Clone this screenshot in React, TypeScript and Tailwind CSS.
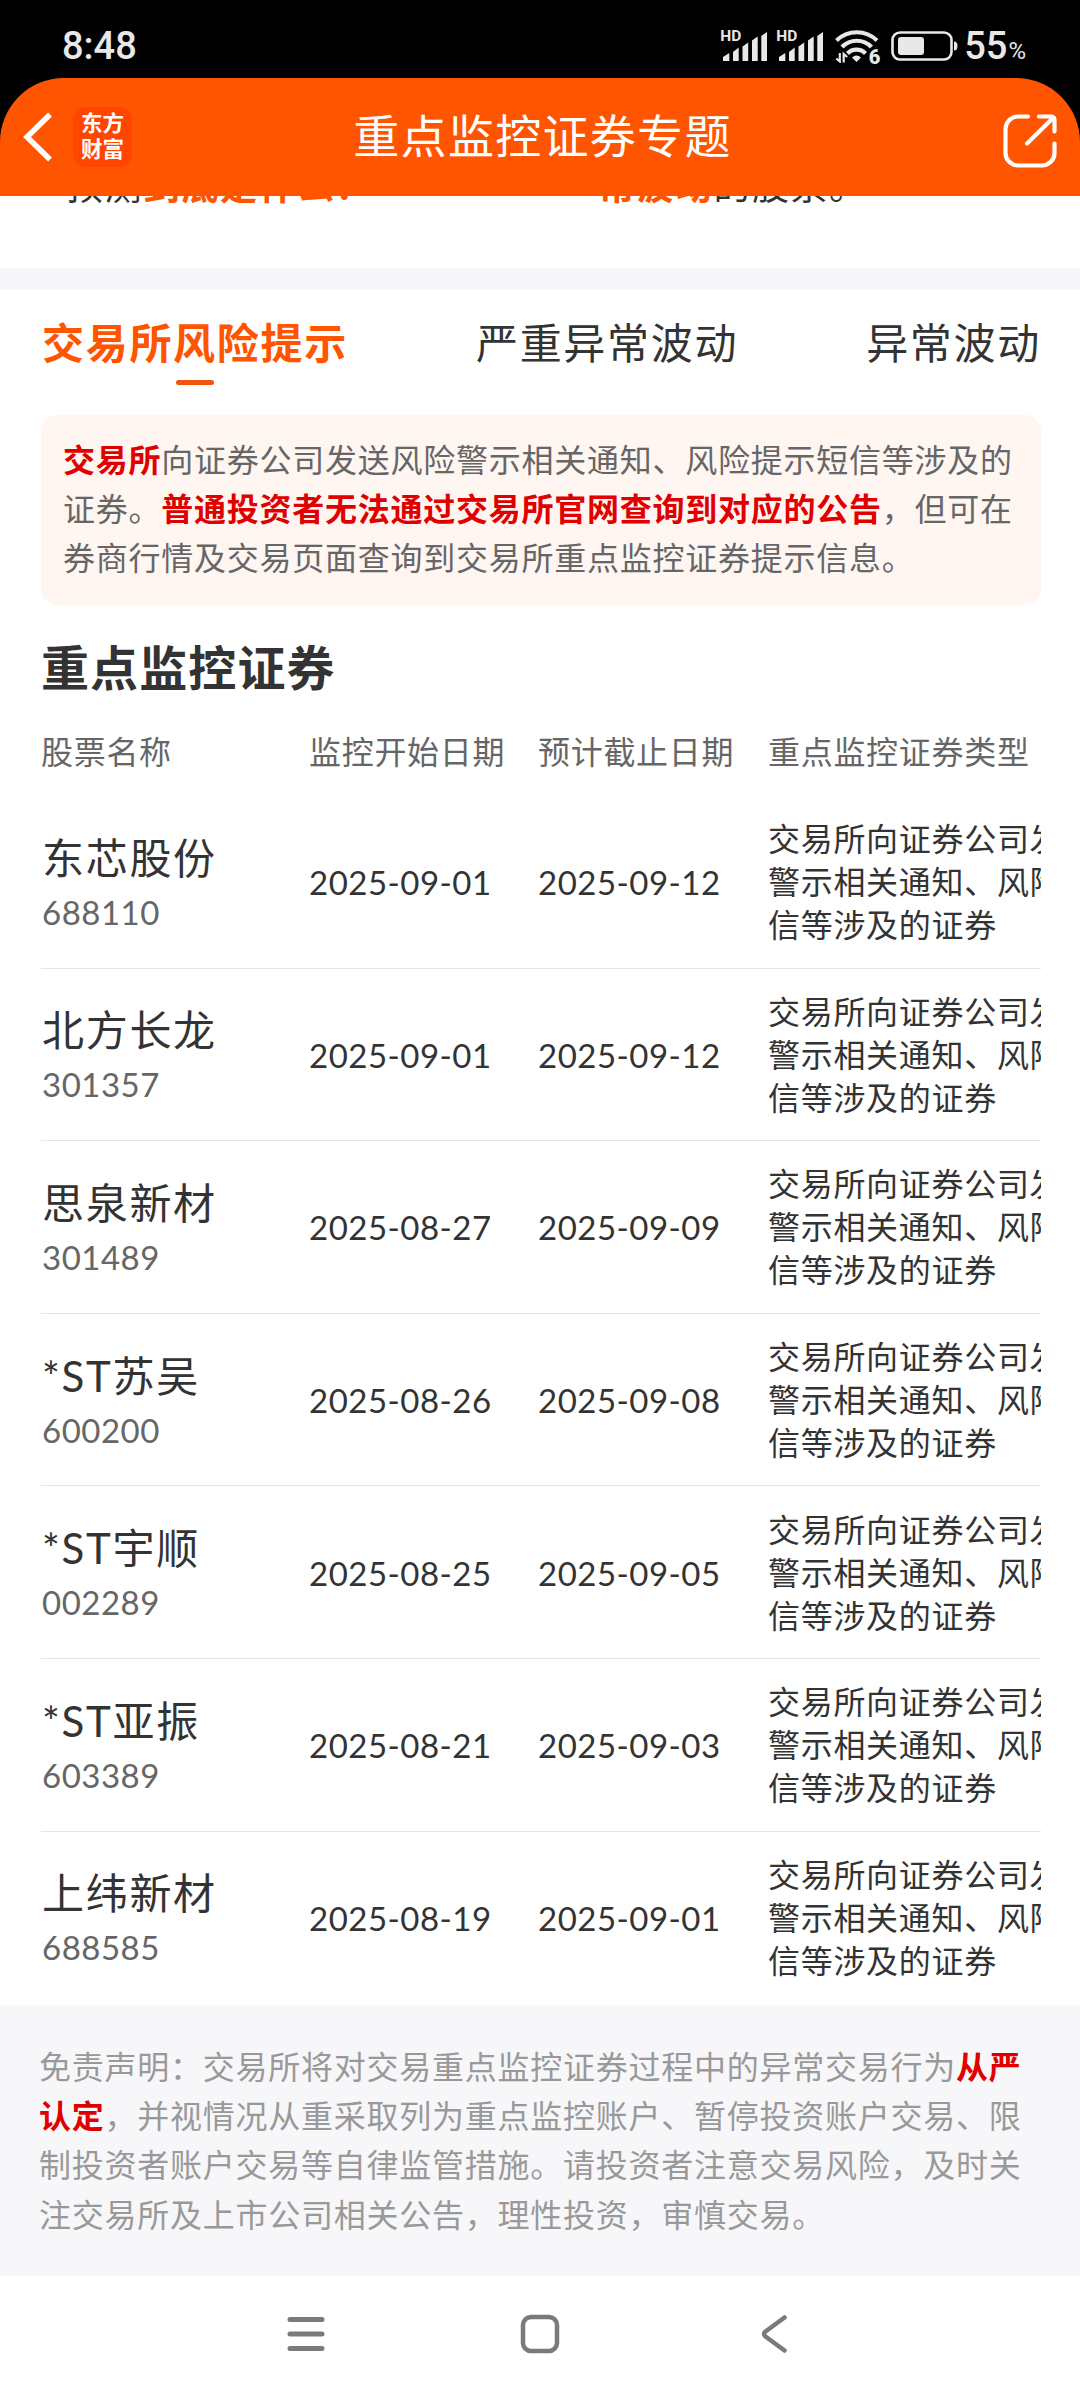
import clsx from "clsx";

const stocks = [
  { name: "东芯股份", code: "688110", start: "2025-09-01", end: "2025-09-12" },
  { name: "北方长龙", code: "301357", start: "2025-09-01", end: "2025-09-12" },
  { name: "思泉新材", code: "301489", start: "2025-08-27", end: "2025-09-09" },
  { name: "*ST苏吴", code: "600200", start: "2025-08-26", end: "2025-09-08" },
  { name: "*ST宇顺", code: "002289", start: "2025-08-25", end: "2025-09-05" },
  { name: "*ST亚振", code: "603389", start: "2025-08-21", end: "2025-09-03" },
  { name: "上纬新材", code: "688585", start: "2025-08-19", end: "2025-09-01" },
];

const tabs = ["交易所风险提示", "严重异常波动", "异常波动"];

const columns = "grid grid-cols-[268px_229px_230px_273px]";

function Signal() {
  return (
    <div className="relative h-[32px] w-[46px]">
      <span className="absolute left-[-1px] top-[-1px] font-[Roboto] text-[15.5px] font-bold leading-[15px]">
        HD
      </span>
      <svg viewBox="0 0 46 32" className="size-full" fill="currentColor">
        <path d="M2 31v-4l6.300-4V31zM12 31V22l5.700-4.500V31zM21.500 31V16.500l5.700-4V31zM31 31V10.500l5.700-4V31zM40.300 31V6l5.700-4V31z" />
      </svg>
    </div>
  );
}

function Wifi() {
  return (
    <div className="relative h-[34px] w-[45px]">
      <svg viewBox="0 0 45 34" className="size-full" fill="none" stroke="currentColor" strokeWidth="4.2">
        <path d="M1.500 11.500a29 29 0 0 1 40.500 0" />
        <path d="M7 18a20.500 20.500 0 0 1 29.500 0" />
        <path d="M12.500 24.500a12.500 12.500 0 0 1 18 0" />
        <path d="M17 28.500q4.500-4 9 0l-4.500 4.500z" fill="currentColor" stroke="none" />
        <path d="M4.800 24v8.500l-3.500-3M8.700 33.500V25l3.500 3" strokeWidth="2.200" />
      </svg>
      <span className="absolute bottom-[-2px] right-0 bg-black pl-[1px] font-[Roboto] text-[20px] font-black leading-[16px]">
        6
      </span>
    </div>
  );
}

function StatusBar() {
  return (
    <div className="flex h-[78px] items-center justify-between bg-black pl-[62px] pr-[54px] pt-[14px] font-[Roboto] text-[#e8e8e8]">
      <span className="text-[38px] font-medium leading-[48px]">8:48</span>
      <div className="flex items-center">
        <Signal />
        <div className="w-[10px]" />
        <Signal />
        <div className="w-[12px]" />
        <Wifi />
        <svg viewBox="0 0 68 30" className="ml-[11px] h-[30px] w-[68px]" fill="none">
          <rect x="1.500" y="1.500" width="59" height="27" rx="7.500" stroke="currentColor" strokeWidth="2.600" />
          <rect x="7" y="6" width="26" height="18" rx="3" fill="currentColor" />
          <path d="M63 10.500q3.500 0 3.500 4.500t-3.500 4.500z" fill="currentColor" />
        </svg>
        <span className="ml-[5px] text-[38px] font-medium leading-[48px]">55</span>
        <span className="ml-[1px] mt-[9px] text-[24px] leading-[30px]">%</span>
      </div>
    </div>
  );
}

function Header() {
  return (
    <div className="bg-black">
      <header className="flex h-[118px] items-center justify-between rounded-t-[64px] bg-[#ff5500] px-[23px] text-white">
        <div className="flex w-[200px] items-center">
          <svg viewBox="0 0 30 50" className="h-[50px] w-[30px]" fill="none" stroke="currentColor" strokeWidth="5.500">
            <path d="M27 2.500 4 25l23 22.500" />
          </svg>
          <div className="ml-[20px] flex h-[60px] w-[59px] flex-col items-center justify-center rounded-[13px] bg-[#ff4500] pb-[2px] text-[21.500px] font-bold leading-[26px]">
            <span>东方</span>
            <span>财富</span>
          </div>
        </div>
        <h1 className="pb-[2px] pl-[5px] text-[46px] leading-[60px] tracking-[1.300px]">
          重点监控证券专题
        </h1>
        <div className="flex w-[200px] justify-end pt-[8px]">
          <svg viewBox="0 0 54 54" className="size-[54px]" fill="none" stroke="currentColor" strokeWidth="4.200" strokeLinecap="round">
            <path d="M25 2.500H15A12.500 12.500 0 0 0 2.500 15v24A12.500 12.500 0 0 0 15 51.500h24A12.500 12.500 0 0 0 51.500 39V29.500" />
            <path d="M36 2.500h12q3.500 0 3.500 3.500v11.500M49 5 24 29.500" />
          </svg>
        </div>
      </header>
    </div>
  );
}

function StockRow({ stock, last }: any) {
  return (
    <div
      className={clsx(
        columns,
        "h-[172.600px] items-center border-b-[1.500px]",
        last ? "border-transparent" : "border-[#e5e5e5]"
      )}
    >
      <div className="pl-[1px] pt-[2px]">
        <p className="text-[42px] leading-[58px] tracking-[1.700px]">{stock.name}</p>
        <p className="text-[33px] leading-[50px] tracking-[0.500px] text-[#666666]">
          {stock.code}
        </p>
      </div>
      <p className="pt-[2px] text-[33px] leading-[43px] tracking-[0.500px]">{stock.start}</p>
      <p className="pt-[2px] text-[33px] leading-[43px] tracking-[0.500px]">{stock.end}</p>
      <div className="overflow-hidden">
        <p className="w-[400px] text-[32px] leading-[43px] tracking-[0.700px]">
          交易所向证券公司发送风险警示相关通知、风险提示短信等涉及的证券
        </p>
      </div>
    </div>
  );
}

export default function App() {
  return (
    <div
      lang="zh-CN"
      className="flex h-[2400px] w-[1080px] flex-col overflow-hidden bg-white font-[Lato,'Noto_Sans_CJK_SC',sans-serif] text-[#333333]"
    >
      <StatusBar />
      <Header />

      {/* bottom of the intro cards, scrolled under the header */}
      <div className="flex h-[72px] items-start overflow-hidden pl-[66px] text-[37px] leading-[54px] tracking-[1.500px]">
        <p className="mt-[-37px] w-[532px]">
          预测<b className="text-[#ff5500]">到底是什么？</b>
        </p>
        <p className="mt-[-37px]">
          <b className="text-[#ff5500]">常波动</b>的股票。
        </p>
      </div>
      <div className="h-[22px] bg-[#f7f7fa]" />

      <nav className="flex h-[125px] justify-between pl-[42px] pr-[39px] pt-[23px] text-[42px] leading-[60px] tracking-[1.700px]">
        {tabs.map((tab, i) => (
          <div key={tab} className="flex flex-col items-center">
            <span className={clsx(i === 0 && "font-bold text-[#ff5500]")}>{tab}</span>
            {i === 0 && <i className="mt-[7px] h-[5px] w-[38px] rounded-full bg-[#ee570d]" />}
          </div>
        ))}
      </nav>

      <div className="ml-[41px] mr-[39px] h-[190px] rounded-[16px] bg-[#fff5f1] px-[22px] pt-[20px] text-[32px] leading-[49.200px] tracking-[0.750px] text-[#666666]">
        <b className="text-[#e00000]">交易所</b>
        向证券公司发送风险警示相关通知、风险提示短信等涉及的证券。
        <b className="text-[#e00000]">普通投资者无法通过交易所官网查询到对应的公告</b>
        ，但可在券商行情及交易页面查询到交易所重点监控证券提示信息。
      </div>

      <section className="h-[1400px] pl-[41px] pr-[39px] pt-[31px]">
        <h2 className="text-[48px] font-bold leading-[64px] tracking-[1.100px]">重点监控证券</h2>
        <div className={clsx(columns, "mt-[28px] h-[68px] text-[32px] leading-[48px] tracking-[0.700px] text-[#666666]")}>
          <span>股票名称</span>
          <span>监控开始日期</span>
          <span>预计截止日期</span>
          <span>重点监控证券类型</span>
        </div>
        {stocks.map((stock, i) => (
          <StockRow key={stock.code} stock={stock} last={i === stocks.length - 1} />
        ))}
      </section>

      <footer className="h-[271px] bg-[#f7f7fa] pl-[39px] pr-[41px] pt-[37px] text-[32px] leading-[49.200px] tracking-[0.750px] text-[#999999]">
        免责声明：交易所将对交易重点监控证券过程中的异常交易行为
        <b className="text-[#e00000]">从严认定</b>
        ，并视情况从重采取列为重点监控账户、暂停投资账户交易、限制投资者账户交易等自律监管措施。请投资者注意交易风险，及时关注交易所及上市公司相关公告，理性投资，审慎交易。
      </footer>

      {/* system navigation */}
      <div className="flex h-[116px] items-center justify-center gap-[194px] text-[#7a7a7a]">
        <svg viewBox="0 0 40 40" className="size-[40px]" fill="none" stroke="currentColor" strokeWidth="5" strokeLinecap="round">
          <path d="M4 5.500h32M4 20h32M4 34.500h32" />
        </svg>
        <svg viewBox="0 0 40 40" className="size-[40px]" fill="none" stroke="currentColor" strokeWidth="4.500">
          <rect x="3" y="3" width="34" height="34" rx="8" />
        </svg>
        <svg viewBox="0 0 40 40" className="size-[40px]" fill="none" stroke="currentColor" strokeWidth="4.500" strokeLinecap="round" strokeLinejoin="round">
          <path d="M30.500 3.500 11.500 17.500q-3 2.500 0 5l19 14" />
        </svg>
      </div>
    </div>
  );
}
